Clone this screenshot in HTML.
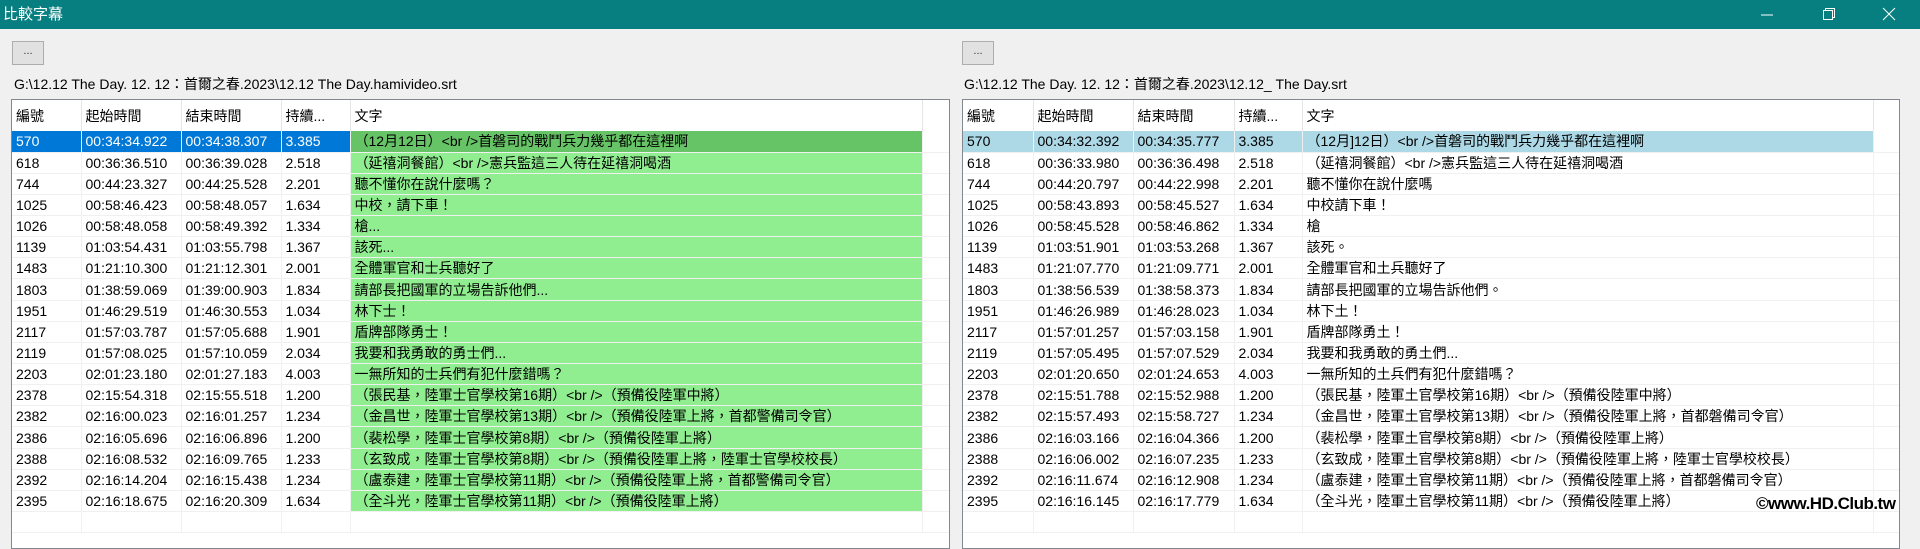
<!DOCTYPE html>
<html><head><meta charset="utf-8"><style>
*{margin:0;padding:0;box-sizing:border-box}
body{width:1920px;height:536px;overflow:hidden;background:#f0f0f0;font-family:"Liberation Sans","Noto Sans CJK TC",sans-serif;font-size:14px;color:#000;position:relative}
.title{position:absolute;left:0;top:0;width:1920px;height:29px;background:#077f80;color:#fff;font-size:15px;line-height:29px;padding-left:3px}
.btn{position:absolute;top:41px;width:32px;height:24px;background:#e1e1e1;border:1px solid #adadad;font-size:11px;text-align:center;line-height:18px;color:#333}
.path{position:absolute;top:74px;font-size:14px}
.list{position:absolute;top:99px;height:450px;background:#fff;border:1px solid #828790;overflow:hidden}
table{border-collapse:collapse;table-layout:fixed;position:absolute;left:0;top:0}
td,th{height:21.15px;border-bottom:1px solid #f0f0f0;border-right:1px solid #f0f0f0;padding-left:4px;white-space:nowrap;overflow:hidden;font-weight:normal;text-align:left;font-size:14px}
th{height:31px;border-right:1px solid #e5e5e5;border-bottom:none}
.L td.t{background:#90ee90}
.L tr.s td.t{background:#66c466}
.L tr.s td.b{background:#0078d7;color:#fff}
.R tr.s td{background:#add8e6}
.ctl{position:absolute;top:6px;color:#fff;font-size:16px}
</style></head><body>
<div class="title">比較字幕</div>
<svg class="ctl" style="left:1760px;top:8px" width="14" height="14"><line x1="1" y1="7" x2="13" y2="7" stroke="#fff"/></svg>
<svg class="ctl" style="left:1822px;top:7px" width="14" height="14"><rect x="1.5" y="3.5" width="9" height="9" fill="none" stroke="#fff"/><path d="M3.5 3.5V1.5H12.5V10.5H10.5" fill="none" stroke="#fff"/></svg>
<svg class="ctl" style="left:1882px;top:7px" width="14" height="14"><path d="M1 1L13 13M13 1L1 13" stroke="#fff"/></svg>
<div class="btn" style="left:12px">...</div>
<div class="btn" style="left:962px">...</div>
<div class="path" style="left:14px">G:\12.12 The Day. 12. 12：首爾之春.2023\12.12 The Day.hamivideo.srt</div>
<div class="path" style="left:964px">G:\12.12 The Day. 12. 12：首爾之春.2023\12.12_ The Day.srt</div>

<div class="list L" style="left:11px;width:939px">
<table style="width:939px">
<colgroup><col style="width:69px"><col style="width:100px"><col style="width:100px"><col style="width:69px"><col style="width:572px"><col style="width:29px"></colgroup>
<tr><th>編號</th><th>起始時間</th><th>結束時間</th><th>持續...</th><th>文字</th><th></th></tr>
<tr class="s"><td class="b">570</td><td class="b">00:34:34.922</td><td class="b">00:34:38.307</td><td class="b">3.385</td><td class="t">（12月12日）&lt;br /&gt;首磐司的戰鬥兵力幾乎都在這裡啊</td><td></td></tr>
<tr><td>618</td><td>00:36:36.510</td><td>00:36:39.028</td><td>2.518</td><td class="t">（延禧洞餐館）&lt;br /&gt;憲兵監這三人待在延禧洞喝酒</td><td></td></tr>
<tr><td>744</td><td>00:44:23.327</td><td>00:44:25.528</td><td>2.201</td><td class="t">聽不懂你在說什麼嗎？</td><td></td></tr>
<tr><td>1025</td><td>00:58:46.423</td><td>00:58:48.057</td><td>1.634</td><td class="t">中校，請下車！</td><td></td></tr>
<tr><td>1026</td><td>00:58:48.058</td><td>00:58:49.392</td><td>1.334</td><td class="t">槍...</td><td></td></tr>
<tr><td>1139</td><td>01:03:54.431</td><td>01:03:55.798</td><td>1.367</td><td class="t">該死...</td><td></td></tr>
<tr><td>1483</td><td>01:21:10.300</td><td>01:21:12.301</td><td>2.001</td><td class="t">全體軍官和士兵聽好了</td><td></td></tr>
<tr><td>1803</td><td>01:38:59.069</td><td>01:39:00.903</td><td>1.834</td><td class="t">請部長把國軍的立場告訴他們...</td><td></td></tr>
<tr><td>1951</td><td>01:46:29.519</td><td>01:46:30.553</td><td>1.034</td><td class="t">林下士！</td><td></td></tr>
<tr><td>2117</td><td>01:57:03.787</td><td>01:57:05.688</td><td>1.901</td><td class="t">盾牌部隊勇士！</td><td></td></tr>
<tr><td>2119</td><td>01:57:08.025</td><td>01:57:10.059</td><td>2.034</td><td class="t">我要和我勇敢的勇士們...</td><td></td></tr>
<tr><td>2203</td><td>02:01:23.180</td><td>02:01:27.183</td><td>4.003</td><td class="t">一無所知的士兵們有犯什麼錯嗎？</td><td></td></tr>
<tr><td>2378</td><td>02:15:54.318</td><td>02:15:55.518</td><td>1.200</td><td class="t">（張民基，陸軍士官學校第16期）&lt;br /&gt;（預備役陸軍中將）</td><td></td></tr>
<tr><td>2382</td><td>02:16:00.023</td><td>02:16:01.257</td><td>1.234</td><td class="t">（金昌世，陸軍士官學校第13期）&lt;br /&gt;（預備役陸軍上將，首都警備司令官）</td><td></td></tr>
<tr><td>2386</td><td>02:16:05.696</td><td>02:16:06.896</td><td>1.200</td><td class="t">（裴松學，陸軍士官學校第8期）&lt;br /&gt;（預備役陸軍上將）</td><td></td></tr>
<tr><td>2388</td><td>02:16:08.532</td><td>02:16:09.765</td><td>1.233</td><td class="t">（玄致成，陸軍士官學校第8期）&lt;br /&gt;（預備役陸軍上將，陸軍士官學校校長）</td><td></td></tr>
<tr><td>2392</td><td>02:16:14.204</td><td>02:16:15.438</td><td>1.234</td><td class="t">（盧泰建，陸軍士官學校第11期）&lt;br /&gt;（預備役陸軍上將，首都警備司令官）</td><td></td></tr>
<tr><td>2395</td><td>02:16:18.675</td><td>02:16:20.309</td><td>1.634</td><td class="t">（全斗光，陸軍士官學校第11期）&lt;br /&gt;（預備役陸軍上將）</td><td></td></tr>
<tr><td></td><td></td><td></td><td></td><td></td><td></td></tr>
</table></div>

<div class="list R" style="left:962px;width:938px">
<table style="width:938px">
<colgroup><col style="width:70px"><col style="width:100px"><col style="width:101px"><col style="width:68px"><col style="width:571px"><col style="width:28px"></colgroup>
<tr><th>編號</th><th>起始時間</th><th>結束時間</th><th>持續...</th><th>文字</th><th></th></tr>
<tr class="s"><td>570</td><td>00:34:32.392</td><td>00:34:35.777</td><td>3.385</td><td>（12月]12日）&lt;br /&gt;首磐司的戰鬥兵力幾乎都在這裡啊</td><td style="background:#fff"></td></tr>
<tr><td>618</td><td>00:36:33.980</td><td>00:36:36.498</td><td>2.518</td><td>（延禧洞餐館）&lt;br /&gt;憲兵監這三人待在延禧洞喝酒</td><td></td></tr>
<tr><td>744</td><td>00:44:20.797</td><td>00:44:22.998</td><td>2.201</td><td>聽不懂你在說什麼嗎</td><td></td></tr>
<tr><td>1025</td><td>00:58:43.893</td><td>00:58:45.527</td><td>1.634</td><td>中校請下車！</td><td></td></tr>
<tr><td>1026</td><td>00:58:45.528</td><td>00:58:46.862</td><td>1.334</td><td>槍</td><td></td></tr>
<tr><td>1139</td><td>01:03:51.901</td><td>01:03:53.268</td><td>1.367</td><td>該死。</td><td></td></tr>
<tr><td>1483</td><td>01:21:07.770</td><td>01:21:09.771</td><td>2.001</td><td>全體軍官和土兵聽好了</td><td></td></tr>
<tr><td>1803</td><td>01:38:56.539</td><td>01:38:58.373</td><td>1.834</td><td>請部長把國軍的立場告訴他們。</td><td></td></tr>
<tr><td>1951</td><td>01:46:26.989</td><td>01:46:28.023</td><td>1.034</td><td>林下土！</td><td></td></tr>
<tr><td>2117</td><td>01:57:01.257</td><td>01:57:03.158</td><td>1.901</td><td>盾牌部隊勇土！</td><td></td></tr>
<tr><td>2119</td><td>01:57:05.495</td><td>01:57:07.529</td><td>2.034</td><td>我要和我勇敢的勇土們...</td><td></td></tr>
<tr><td>2203</td><td>02:01:20.650</td><td>02:01:24.653</td><td>4.003</td><td>一無所知的土兵們有犯什麼錯嗎？</td><td></td></tr>
<tr><td>2378</td><td>02:15:51.788</td><td>02:15:52.988</td><td>1.200</td><td>（張民基，陸軍土官學校第16期）&lt;br /&gt;（預備役陸軍中將）</td><td></td></tr>
<tr><td>2382</td><td>02:15:57.493</td><td>02:15:58.727</td><td>1.234</td><td>（金昌世，陸軍土官學校第13期）&lt;br /&gt;（預備役陸軍上將，首都磐備司令官）</td><td></td></tr>
<tr><td>2386</td><td>02:16:03.166</td><td>02:16:04.366</td><td>1.200</td><td>（裴松學，陸軍土官學校第8期）&lt;br /&gt;（預備役陸軍上將）</td><td></td></tr>
<tr><td>2388</td><td>02:16:06.002</td><td>02:16:07.235</td><td>1.233</td><td>（玄致成，陸軍土官學校第8期）&lt;br /&gt;（預備役陸軍上將，陸軍士官學校校長）</td><td></td></tr>
<tr><td>2392</td><td>02:16:11.674</td><td>02:16:12.908</td><td>1.234</td><td>（盧泰建，陸軍土官學校第11期）&lt;br /&gt;（預備役陸軍上將，首都磐備司令官）</td><td></td></tr>
<tr><td>2395</td><td>02:16:16.145</td><td>02:16:17.779</td><td>1.634</td><td>（全斗光，陸軍土官學校第11期）&lt;br /&gt;（預備役陸軍上將）</td><td></td></tr>
<tr><td></td><td></td><td></td><td></td><td></td><td></td></tr>
</table></div>
<div style="position:absolute;left:1756px;top:494px;font:bold 17px 'Liberation Sans',sans-serif;color:#000;text-shadow:-1px -1px 0 #fff,1px -1px 0 #fff,-1px 1px 0 #fff,1px 1px 0 #fff;letter-spacing:-0.5px">©www.HD.Club.tw</div>
</body></html>
